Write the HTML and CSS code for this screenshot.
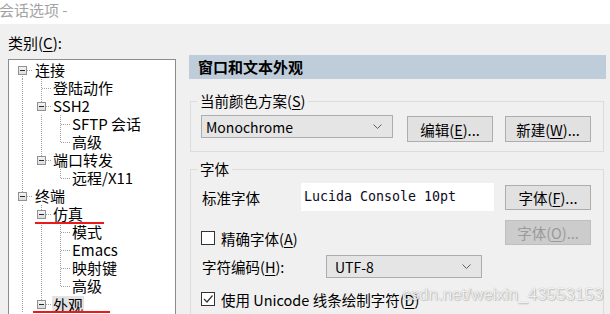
FILE: index.html
```html
<!DOCTYPE html>
<html lang="zh-CN">
<head>
<meta charset="utf-8">
<title>会话选项</title>
<link rel="stylesheet" href="styles.css">
</head>
<body>
<div class="titlebar">会话选项 -</div>
<div class="main">
  <div class="left">
    <div class="cat-label">类别(<u>C</u>):</div>
    <div class="tree">
      <div class="row"><span class="c n dn"><i class="box"></i></span><span class="txt l1">连接</span></div>
      <div class="row"><span class="c v"></span><span class="c t"></span><span class="txt">登陆动作</span></div>
      <div class="row"><span class="c v"></span><span class="c n up dn"><i class="box"></i></span><span class="txt">SSH2</span></div>
      <div class="row"><span class="c v"></span><span class="c v"></span><span class="c t"></span><span class="txt">SFTP 会话</span></div>
      <div class="row"><span class="c v"></span><span class="c v"></span><span class="c l"></span><span class="txt">高级</span></div>
      <div class="row"><span class="c v"></span><span class="c n up"><i class="box"></i></span><span class="txt">端口转发</span></div>
      <div class="row"><span class="c v"></span><span class="c"></span><span class="c l"></span><span class="txt">远程/X11</span></div>
      <div class="row"><span class="c n up dn"><i class="box"></i></span><span class="txt l1">终端</span></div>
      <div class="row"><span class="c v"></span><span class="c n up dn"><i class="box"></i></span><span class="txt">仿真</span><span class="mark mark-emu"></span></div>
      <div class="row"><span class="c v"></span><span class="c v"></span><span class="c t"></span><span class="txt">模式</span></div>
      <div class="row"><span class="c v"></span><span class="c v"></span><span class="c t"></span><span class="txt">Emacs</span></div>
      <div class="row"><span class="c v"></span><span class="c v"></span><span class="c t"></span><span class="txt">映射键</span></div>
      <div class="row"><span class="c v"></span><span class="c v"></span><span class="c l"></span><span class="txt">高级</span></div>
      <div class="row"><span class="c v"></span><span class="c n up dn"><i class="box"></i></span><span class="txt sel">外观</span><span class="mark mark-look"></span></div>
    </div>
  </div>

  <div class="right">
    <div class="header">窗口和文本外观</div>

    <div class="group g1">
      <div class="group-title">当前颜色方案(<u>S</u>)</div>
      <div class="combo combo-scheme"><span>Monochrome</span>
        <svg class="chev" width="9" height="5" viewBox="0 0 9 5"><polyline points="0.5,0.5 4.5,4.5 8.5,0.5" fill="none" stroke="#606060" stroke-width="1"/></svg>
      </div>
      <div class="btn btn-edit">编辑(<u>E</u>)...</div>
      <div class="btn btn-new">新建(<u>W</u>)...</div>
    </div>

    <div class="group g2">
      <div class="group-title">字体</div>
      <div class="frow r1">
        <div class="flabel">标准字体</div>
        <div class="fontfield">Lucida Console 10pt</div>
        <div class="btn btn-font">字体(<u>F</u>)...</div>
      </div>
      <div class="frow r2">
        <div class="check"><span class="cbox"></span><span>精确字体(<u>A</u>)</span></div>
        <div class="btn btn-font disabled">字体(<u>O</u>)...</div>
      </div>
      <div class="frow r3">
        <div class="flabel lab-enc">字符编码(<u>H</u>):</div>
        <div class="combo combo-enc"><span>UTF-8</span>
          <svg class="chev" width="9" height="5" viewBox="0 0 9 5"><polyline points="0.5,0.5 4.5,4.5 8.5,0.5" fill="none" stroke="#606060" stroke-width="1"/></svg>
        </div>
      </div>
      <div class="frow r4">
        <div class="check"><span class="cbox"><svg width="12" height="12" viewBox="0 0 12 12"><polyline points="2,6 5,9 10.5,2.5" fill="none" stroke="#333" stroke-width="1.2"/></svg></span><span>使用 Unicode 线条绘制字符(<u>D</u>)</span></div>
      </div>
    </div>
  </div>
</div>
<div class="watermark">csdn.net/weixin_43553153</div>
</body>
</html>
```
FILE: styles.css
```css
* { box-sizing: border-box; }
html, body { margin: 0; padding: 0; }
body {
  width: 610px;
  height: 314px;
  overflow: hidden;
  position: relative;
  background: #f0f0f0;
  color: #000;
  font-family: "Noto Sans CJK SC", "Noto Sans", sans-serif;
  font-size: 15px;
}
u { text-decoration: underline; text-underline-offset: 2px; }

.titlebar {
  height: 24px;
  background: #fff;
  color: #a3a3a3;
  line-height: 20px;
  margin-left: -1px;
  font-size: 15px;
}

.main { display: flex; padding-left: 8px; gap: 13px; }

.left { width: 168px; flex: none; }
.cat-label { margin-top: 10px; height: 18px; line-height: 18px; }
.tree {
  margin-top: 7px;
  height: 262px;
  border: 1px solid #8c8c8c;
  border-bottom: 0;
  background: #fff;
  padding: 1px 0 0 4px;
  position: relative;
  overflow: hidden;
}
.row { display: flex; height: 18px; line-height: 18px; position: relative; white-space: nowrap; }
.c { width: 19px; height: 18px; flex: none; position: relative; }
.c::before, .c::after { content: ""; position: absolute; }
.c.v::before, .c.t::before, .c.l::before, .c.n.up::before, .c.n.dn::before {
  left: 9px; width: 1px;
  background: repeating-linear-gradient(to bottom, #a0a0a0 0 1px, transparent 1px 2px);
}
.c.v::before, .c.t::before { top: 0; bottom: 0; }
.c.l::before { top: 0; height: 10px; }
.c.n.up::before { top: 0; height: 10px; }
.c.n.dn::before { top: 9px; bottom: 0; }
.c.n.up.dn::before { top: 0; bottom: 0; }
.c.t::after, .c.l::after, .c.n::after {
  left: 10px; width: 10px; top: 9px; height: 1px;
  background: repeating-linear-gradient(to right, #a0a0a0 0 1px, transparent 1px 2px);
}
.box {
  position: absolute;
  left: 5px; top: 5px;
  width: 9px; height: 9px;
  border: 1px solid #919191;
  background: linear-gradient(#f4f4f4, #dcdcdc);
  z-index: 1;
}
.box::after {
  content: "";
  position: absolute;
  left: 1px; top: 3px;
  width: 5px; height: 1px;
  background: #1f2a44;
}
.txt { margin-left: 2px; }
.txt.l1 { margin-left: 3px; }
.txt.sel { background: #e3e3e3; padding: 0 1px; margin-left: 1px; line-height: 17px; height: 17px; margin-top: 1px; }
.mark { position: absolute; height: 2px; background: #ea1a1a; z-index: 2; }
.mark-emu { left: 22px; width: 69px; bottom: -1px; }
.mark-look { left: 20px; width: 77px; bottom: 0; }

.right { width: 417px; flex: none; margin-top: 31px; }
.header {
  height: 24px;
  line-height: 24px;
  background: #bfcddb;
  padding-left: 9px;
  font-weight: bold;
  font-size: 15px;
}
.group {
  position: relative;
  border: 1px solid #dcdcdc;
  margin-left: 1px;
  width: 414px;
  font-size: 14.5px;
}
.group-title {
  position: absolute;
  top: -10px; left: 6px;
  padding: 0 3px;
  background: #f0f0f0;
  line-height: 18px;
}
.g1 {
  margin-top: 22px;
  height: 51px;
  padding: 13px 0 0 10px;
  display: flex;
  align-items: flex-start;
}
.combo {
  height: 23px;
  border: 1px solid #adadad;
  background: #e5e5e5;
  display: flex;
  align-items: center;
  justify-content: space-between;
  padding: 0 10px 0 4px;
  font-size: 14px;
}
.combo-scheme { width: 192px; }
.btn {
  width: 86px;
  height: 26px;
  border: 1px solid #adadad;
  background: #e1e1e1;
  display: flex;
  align-items: center;
  justify-content: center;
  font-size: 14.5px;
}
.btn-edit { margin-left: 14px; margin-top: 1px; }
.btn-new { margin-left: 12px; margin-top: 1px; }

.g2 {
  margin-top: 17px;
  height: 145px;
  border-bottom: 0;
  padding: 13px 0 0 10px;
}
.frow { display: flex; }
.r1 { height: 28px; align-items: center; }
.flabel { width: 100px; flex: none; padding-left: 1px; }
.fontfield {
  width: 193px; height: 28px;
  background: #fff;
  font-family: "DejaVu Sans Mono", monospace;
  font-size: 13.3px;
  line-height: 27px;
  padding-left: 3px;
  color: #0a0a1e;
}
.btn-font { margin-left: 11px; height: 25px; }
.r2 { margin-top: 9px; height: 25px; align-items: flex-end; justify-content: space-between; width: 390px; }
.btn.disabled { background: #cccccc; border-color: #bfbfbf; color: #9a9a9a; }
.check { display: flex; align-items: center; height: 14px; gap: 6px; }
.cbox {
  width: 14px; height: 14px;
  border: 1px solid #333;
  background: #fff;
  display: flex; align-items: center; justify-content: center;
}
.r3 { margin-top: 10px; height: 23px; align-items: center; }
.lab-enc { width: 125px; }
.combo-enc { width: 156px; padding-left: 8px; }
.r4 { margin-top: 14px; }

.watermark {
  position: absolute;
  left: 402px; top: 285px;
  font-family: "Liberation Sans", Arial, sans-serif;
  font-size: 17px;
  line-height: 20px;
  color: rgba(255, 255, 255, 0.85);
  text-shadow: 0 0 1px rgba(0, 0, 0, 0.35), 1px 1px 1px rgba(0, 0, 0, 0.15);
}
```
